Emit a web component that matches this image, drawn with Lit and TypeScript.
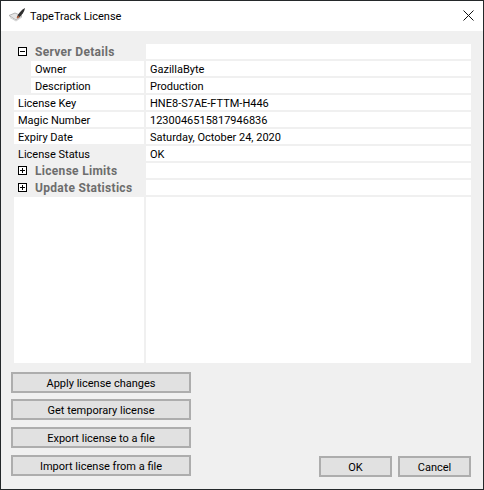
import { LitElement, html, css } from "lit";
import { customElement } from "lit/decorators.js";

const minus = html`<svg class="glyph" width="9" height="9" viewBox="0 0 9 9" shape-rendering="crispEdges"><path d="M.5.5h8v8h-8z" fill="#fff" stroke="#000"/><path d="M2 4.5h5" stroke="#000"/></svg>`;
const plus = html`<svg class="glyph" width="9" height="9" viewBox="0 0 9 9" shape-rendering="crispEdges"><path d="M.5.5h8v8h-8z" fill="#fff" stroke="#000"/><path d="M2 4.5h5M4.5 2v5" stroke="#000"/></svg>`;

@customElement("app-root")
export class AppRoot extends LitElement {
  static styles = css`
    :host { display: block; width: 484px; height: 490px; font-family: Roboto, "Liberation Sans", sans-serif; font-size: 11px; color: #000; }
    .window { box-sizing: border-box; width: 484px; height: 490px; border: 1px solid #24282a; display: flex; flex-direction: column; background: #f0f0f0; }
    .title { height: 30px; background: #fff; display: flex; align-items: center; padding: 0 5px 0 6px; flex: none; }
    .title .logo { flex: none; margin-right: 3px; }
    .title .text { flex: 1; }
    .close { flex: none; margin: 0 4px 2px 0; }
    .content { flex: 1; display: flex; flex-direction: column; padding: 13px 12px 12px 13px; min-height: 0; }
    .grid { display: grid; grid-template-columns: 130px 325px; column-gap: 2px; row-gap: 2px; grid-template-rows: repeat(9, 15px) 166px; line-height: 17px; flex: none; }
    .cell { background: #fff; padding-left: 4px; white-space: nowrap; overflow: hidden; }
    .plain { background: transparent; }
    .indent { margin-left: 17px; }
    .cat { background: transparent; padding-left: 4px; display: flex; align-items: center; gap: 8px; font-size: 12px; letter-spacing: .3px; font-weight: 700; color: #6d6d6d; }
    .cat span { line-height: 15px; padding-top: 1px; }
    .footer { flex: 1; display: flex; justify-content: space-between; align-items: flex-end; margin-top: 9px; margin-left: -3px; }
    .stack { display: flex; flex-direction: column; margin-bottom: 1px; }
    button { font: inherit; color: #000; box-sizing: border-box; width: 180px; height: 21px; padding: 1px 0 0; border: 2px solid #adadad; background: #e1e1e1; }
    .stack button + button { margin-top: 7px; }
    .stack button.tight { margin-top: 6px; }
    .small { width: 73px; }
    .actions { display: flex; gap: 6px; }
  `;

  private row(label: string, value: string, cls = "") {
    return html`<div class="cell ${cls}">${label}</div><div class="cell">${value}</div>`;
  }

  private cat(icon: unknown, label: string) {
    return html`<div class="cat">${icon}<span>${label}</span></div><div class="cell"></div>`;
  }

  render() {
    return html`
      <div class="window">
        <div class="title">
          <svg class="logo" width="20" height="16" viewBox="0 0 20 16">
            <path d="M2 7.5 8 5l7 3-6 4z" fill="#e6e6e6" stroke="#a4a4a4" stroke-width=".8"/>
            <path d="M3 9.5l6 3.5 6-4" fill="none" stroke="#c8c8c8" stroke-width=".8"/>
            <path d="M10 9 C11 6 14 2 18 0 C17.5 4 15 7 12 9.5z" fill="#2f2f2f"/>
            <path d="M9.5 10 11 7.5 12.5 9 10.5 10.5z" fill="#b4603c"/>
          </svg>
          <span class="text">TapeTrack License</span>
          <svg class="close" width="11" height="11" viewBox="0 0 11 11"><path d="M.5.5l10 10M10.5.5l-10 10" stroke="#111" stroke-width="1" fill="none"/></svg>
        </div>
        <div class="content">
          <div class="grid">
            ${this.cat(minus, "Server Details")}
            ${this.row("Owner", "GazillaByte", "indent")}
            ${this.row("Description", "Production", "indent")}
            ${this.row("License Key", "HNE8-S7AE-FTTM-H446")}
            ${this.row("Magic Number", "1230046515817946836")}
            ${this.row("Expiry Date", "Saturday, October 24, 2020")}
            ${this.row("License Status", "OK", "plain")}
            ${this.cat(plus, "License Limits")}
            ${this.cat(plus, "Update Statistics")}
            <div class="cell"></div><div class="cell"></div>
          </div>
          <div class="footer">
            <div class="stack">
              <button>Apply license changes</button>
              <button class="tight">Get temporary license</button>
              <button>Export license to a file</button>
              <button>Import license from a file</button>
            </div>
            <div class="actions">
              <button class="small">OK</button>
              <button class="small">Cancel</button>
            </div>
          </div>
        </div>
      </div>
    `;
  }
}
